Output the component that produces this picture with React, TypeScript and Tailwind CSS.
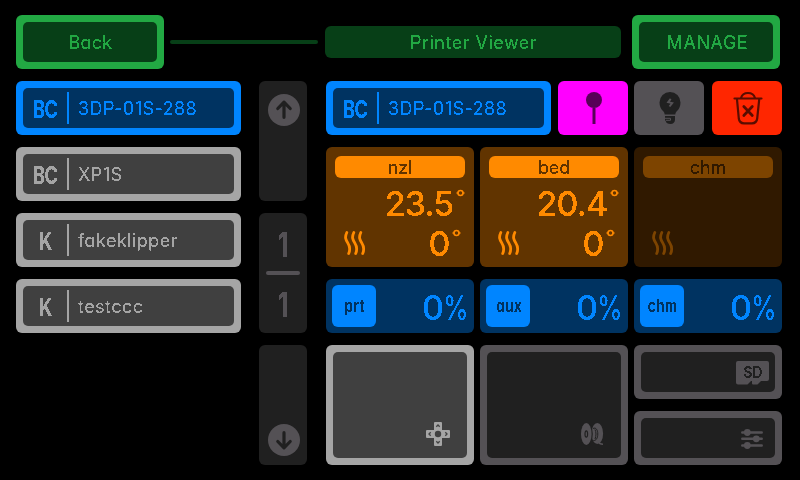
import type { ReactNode } from "react";

const font =
  "font-['Inter','Noto_Sans',sans-serif] [font-feature-settings:'cv11','ss03']";

/* Hard-edged glyphs, as on a small embedded display */
function Px({ className = "", children }: { className?: string; children: ReactNode }) {
  return (
    <span className={`block whitespace-pre leading-none [filter:url(#crisp)] ${className}`}>
      {children}
    </span>
  );
}

/* Thick outlined box whose inner corners are rounded as well */
function Framed({
  frame,
  inner,
  children,
}: {
  frame: string;
  inner: string;
  children: ReactNode;
}) {
  return (
    <button className={`flex shrink-0 rounded-md p-[7px] ${frame}`}>
      <span className={`flex h-full w-full rounded-[5px] ${inner}`}>{children}</span>
    </button>
  );
}

function HeaderButton({ label, className = "" }: { label: string; className?: string }) {
  return (
    <Framed
      frame="h-[54px] w-[148px] bg-[#22a843]"
      inner="items-center justify-center bg-[#073f17] pt-0.5 text-[#22a843]"
    >
      <Px className={`text-[18px] ${className}`}>{label}</Px>
    </Framed>
  );
}

function PrinterRow({ tag, name, active = false }: { tag: string; name: string; active?: boolean }) {
  return (
    <Framed
      frame={`h-[54px] w-[225px] ${active ? "bg-[#0085ff]" : "bg-[#a5a5a5]"}`}
      inner={`items-center ${active ? "bg-[#003361] text-[#0085ff]" : "bg-[#404040] text-[#a5a5a5]"}`}
    >
      <span className="flex w-[44px] justify-center pt-[3px]">
        <Px className="scale-x-[0.76] text-[24px] font-bold tracking-[-0.5px]">{tag}</Px>
      </span>
      <span className="h-8 w-0.5 bg-current" />
      <Px className="mt-0.5 ml-[9px] text-[18px] tracking-[0.45px]">{name}</Px>
    </Framed>
  );
}

function ArrowCircle({ down = false }: { down?: boolean }) {
  return (
    <svg width="32" height="32" viewBox="0 0 32 32" className={down ? "rotate-180" : ""}>
      <circle cx="16" cy="16" r="16" fill="#545155" />
      <path
        d="M16 8.200V23.300M9.800 14.500L16 8.200L22.200 14.500"
        fill="none"
        stroke="#202020"
        strokeWidth="3.200"
        strokeLinecap="round"
        strokeLinejoin="round"
      />
    </svg>
  );
}

function Waves() {
  return (
    <svg width="22" height="24" viewBox="0 0 22 24" fill="none" stroke="currentColor" strokeWidth="2.800" strokeLinecap="round">
      {[0, 7, 14].map((x) => (
        <path key={x} transform={`translate(${x} 0)`} d="M2.800 1.500C.600 6.200 1.600 8.600 3.800 12S6.700 17.800 4.700 22.500" />
      ))}
    </svg>
  );
}

function Reading({ value }: { value: string }) {
  return (
    <span className="flex items-start">
      <Px className="text-[34px] font-medium tracking-[-0.9px]">{value}</Px>
      <svg width="9" height="9" viewBox="0 0 9 9" className="mt-0.5 ml-[2.5px]">
        <circle cx="4.500" cy="4" r="2.500" fill="none" stroke="currentColor" strokeWidth="1.600" />
        <path d="M.5 4H2M7 4h1.500" stroke="currentColor" strokeWidth="1.400" />
      </svg>
    </span>
  );
}

function TempCard({ label, now, target }: { label: string; now?: string; target?: string }) {
  const on = now !== undefined;
  return (
    <div className={`flex h-[120px] w-[148px] flex-col rounded-md px-[9px] pt-[9px] ${on ? "bg-[#613400] text-[#ff8a00]" : "bg-[#301900] text-[#7d4400]"}`}>
      <div className={`flex h-[22px] shrink-0 items-center justify-center rounded-md pt-0.5 ${on ? "bg-[#ff8a00] text-[#613400]" : "bg-[#7d4400] text-[#301900]"}`}>
        <Px className="text-[18px] tracking-[-0.1px]">{label}</Px>
      </div>
      <div className="flex h-[50px] items-start justify-end pt-[9px]">
        {on && <Reading value={now} />}
      </div>
      <div className="flex h-[34px] items-start justify-between pl-[9px]">
        <span className="pt-[3px]"><Waves /></span>
        {on && <span className="-mt-px flex pr-1"><Reading value={target!} /></span>}
      </div>
    </div>
  );
}

function FanCard({ label }: { label: string }) {
  return (
    <div className="flex h-[54px] w-[148px] items-center justify-between rounded-md bg-[#003361] pr-[7px] pl-1.5 text-[#0085ff]">
      <div className="flex h-[42px] w-[44px] items-center justify-center rounded-md bg-[#0085ff] pl-0.5 text-[#003361]">
        <Px className="scale-x-[0.8] text-[17px] font-semibold tracking-[0.6px]">{label}</Px>
      </div>
      <span className="flex items-center pt-[3px]">
        <Px className="text-[34px] font-medium">0</Px>
        <Px className="-ml-px w-6 origin-left scale-x-[0.77] text-[34px]">%</Px>
      </span>
    </div>
  );
}

function PinIcon() {
  return (
    <svg width="70" height="54" viewBox="0 0 70 54">
      <circle cx="36" cy="19" r="8" fill="#590059" />
      <path d="M36 27V43" stroke="#590059" strokeWidth="3" />
    </svg>
  );
}

function BulbIcon() {
  return (
    <svg width="70" height="54" viewBox="0 0 70 54">
      <path
        d="M36 11a10.500 10.500 0 0 1 10.500 10.500c0 4-1.500 6.500-3.500 8.500-1 1-1.500 2-1.700 3.500H30.700c-.2-1.500-.7-2.500-1.700-3.500-2-2-3.500-4.500-3.500-8.500A10.500 10.500 0 0 1 36 11Z"
        fill="#202020"
      />
      <path d="M31 35h10v3.500c0 2.800-1.800 4.500-4.500 4.500S32 42 32 40.500L31 39z" fill="#202020" />
      <path d="M31 37.300h5.500v2H32" fill="none" stroke="#545155" strokeWidth="1" />
      <path d="M36.700 17.800l-2.500 3.300 4 1-2.700 3.400" fill="none" stroke="#545155" strokeWidth="2" />
    </svg>
  );
}

function TrashIcon() {
  return (
    <svg width="70" height="54" viewBox="0 0 70 54" fill="none" stroke="#590d00" strokeWidth="2.200" strokeLinecap="round">
      <path d="M22.500 17.500H49.500M29 17c1-3.500 3.500-5 7-5s6 1.500 7 5M25 18.500L26.800 37.500c.4 3.300 1.900 4.800 5.200 4.800h8c3.300 0 4.800-1.500 5.200-4.800L47.200 18.500" />
      <path d="M31.800 25.500l8.500 9m0-9l-8.500 9" strokeWidth="2.700" />
    </svg>
  );
}

function DpadIcon() {
  return (
    <svg width="24" height="24" viewBox="0 0 24 24">
      <path
        d="M9 0h6q1 0 1 1v7h7q1 0 1 1v6q0 1-1 1h-7v7q0 1-1 1H9q-1 0-1-1v-7H1q-1 0-1-1V9q0-1 1-1h7V1q0-1 1-1Z"
        fill="#a5a5a5"
      />
      <circle cx="12" cy="12" r="3.200" fill="#404040" />
      <path
        d="M10.300 4.700L12 3l1.700 1.700M10.300 19.300L12 21l1.700-1.700M4.700 10.300L3 12l1.700 1.700M19.300 10.300L21 12l-1.700 1.700"
        fill="none"
        stroke="#404040"
        strokeWidth="1.300"
      />
    </svg>
  );
}

function SpoolIcon() {
  return (
    <svg width="23" height="23" viewBox="0 0 23 23">
      <ellipse cx="16.300" cy="10.500" rx="5.800" ry="10.500" fill="#545155" />
      <path d="M17.500 18.500c.5 2 1.800 2.700 4.500 2.700" fill="none" stroke="#545155" strokeWidth="1.500" />
      <ellipse cx="5.500" cy="11" rx="6.300" ry="11.500" fill="#202020" />
      <ellipse cx="5.300" cy="11" rx="5.300" ry="11" fill="#545155" />
      <ellipse cx="5.300" cy="11" rx="1.300" ry="3.200" fill="#545155" stroke="#202020" strokeWidth="1.200" />
      <path d="M12 5.500c3-1.500 4.800 1.500 4.800 5.500s-1.800 7-4.500 6.500M14 6.500c1.300 2.500 1.300 6.500 0 9.500" fill="none" stroke="#202020" strokeWidth="1" />
    </svg>
  );
}

function SdIcon() {
  return (
    <span className="relative flex h-6 w-[33px] items-start justify-center pt-[3px] text-[#202020]">
      <svg width="33" height="24" viewBox="0 0 33 24" className="absolute inset-0">
        <path
          d="M2 0H31q2 0 2 2V18q0 2-2 2h-6l-3 3q-.5.500-1.500.500H17q-1 0-1-1V20h-1l-3 3q-.5.500-1.500.500H2q-2 0-2-2V2Q0 0 2 0Z"
          fill="#545155"
        />
      </svg>
      <Px className="relative scale-x-[0.86] text-[16px] font-semibold">SD</Px>
    </span>
  );
}

function SlidersIcon() {
  return (
    <svg width="22" height="20" viewBox="0 0 22 20" stroke="#545155" fill="#545155" strokeWidth="2.500" strokeLinecap="round">
      <path d="M1.300 3.500H20.700M1.300 9.800H20.700M1.300 16.500H20.700" />
      <g stroke="none">
        <circle cx="6.300" cy="3.500" r="3.400" />
        <circle cx="15.300" cy="9.800" r="3.400" />
        <circle cx="6.300" cy="16.500" r="3.400" />
      </g>
    </svg>
  );
}

export default function App() {
  return (
    <div className={`h-[480px] w-[800px] overflow-hidden bg-black pt-[15px] pl-4 ${font}`}>
      <svg width="0" height="0" className="absolute">
        <filter id="crisp" colorInterpolationFilters="sRGB" x="-10%" y="-20%" width="120%" height="140%">
          <feComponentTransfer>
            <feFuncA type="discrete" tableValues="0 0 1 1 1" />
          </feComponentTransfer>
        </filter>
      </svg>

      <header className="flex h-[54px] items-center">
        <HeaderButton label="Back" className="pl-px tracking-[0.2px]" />
        <div className="ml-1.5 h-1 w-[148px] rounded-full bg-[#073f17]" />
        <h1 className="ml-[7px] flex h-8 w-[296px] items-center justify-center rounded-md bg-[#073f17] pt-0.5 pl-px text-[#22a843]">
          <Px className="text-[18px] tracking-[0.5px]">Printer Viewer</Px>
        </h1>
        <div className="ml-[11px]">
          <HeaderButton label="MANAGE" className="pl-[3px] tracking-[0.6px]" />
        </div>
      </header>

      <main className="mt-3 flex h-[384px]">
        <nav className="flex flex-col gap-3">
          <PrinterRow tag="BC" name="3DP-01S-288" active />
          <PrinterRow tag="BC" name="XP1S" />
          <PrinterRow tag="K" name="fakeklipper" />
          <PrinterRow tag="K" name="testccc" />
        </nav>

        <aside className="ml-[18px] flex w-12 flex-col gap-3 text-[#545155]">
          <button className="flex h-[120px] items-start rounded-md bg-[#202020] pt-[13px] pl-[9px]">
            <ArrowCircle />
          </button>
          <div className="flex h-[120px] flex-col items-center rounded-md bg-[#202020] pt-[15px]">
            <Px className="scale-x-[0.8] text-[34px] font-semibold">1</Px>
            <span className="mt-[9px] h-1 w-[34px] shrink-0 rounded-full bg-[#545155]" />
            <Px className="mt-[13px] scale-x-[0.8] text-[34px] font-semibold">1</Px>
          </div>
          <button className="flex h-[120px] items-end rounded-md bg-[#202020] pb-[9px] pl-[9px]">
            <ArrowCircle down />
          </button>
        </aside>

        <section className="ml-[19px] flex w-[456px] flex-col gap-3">
          <div className="flex">
            <PrinterRow tag="BC" name="3DP-01S-288" active />
            <button className="ml-[7px] rounded-md bg-[#ff00ff]"><PinIcon /></button>
            <button className="ml-1.5 rounded-md bg-[#545155]"><BulbIcon /></button>
            <button className="ml-2 rounded-md bg-[#ff2600]"><TrashIcon /></button>
          </div>
          <div className="flex gap-1.5">
            <TempCard label="nzl" now="23.5" target="0" />
            <TempCard label="bed" now="20.4" target="0" />
            <TempCard label="chm" />
          </div>
          <div className="flex gap-1.5">
            <FanCard label="prt" />
            <FanCard label="aux" />
            <FanCard label="chm" />
          </div>
          <div className="flex gap-1.5">
            <Framed frame="h-[120px] w-[148px] bg-[#a5a5a5]" inner="items-end justify-end bg-[#404040] pr-[17px] pb-3">
              <DpadIcon />
            </Framed>
            <Framed frame="h-[120px] w-[148px] bg-[#545155]" inner="items-end justify-end bg-[#202020] pr-[17px] pb-3">
              <SpoolIcon />
            </Framed>
            <div className="flex flex-col gap-3">
              <Framed frame="h-[54px] w-[148px] bg-[#545155]" inner="items-end justify-end bg-[#202020] pr-1.5 pb-[7px]">
                <SdIcon />
              </Framed>
              <Framed frame="h-[54px] w-[148px] bg-[#545155]" inner="items-end justify-end bg-[#202020] pr-3 pb-[9px]">
                <SlidersIcon />
              </Framed>
            </div>
          </div>
        </section>
      </main>
    </div>
  );
}
